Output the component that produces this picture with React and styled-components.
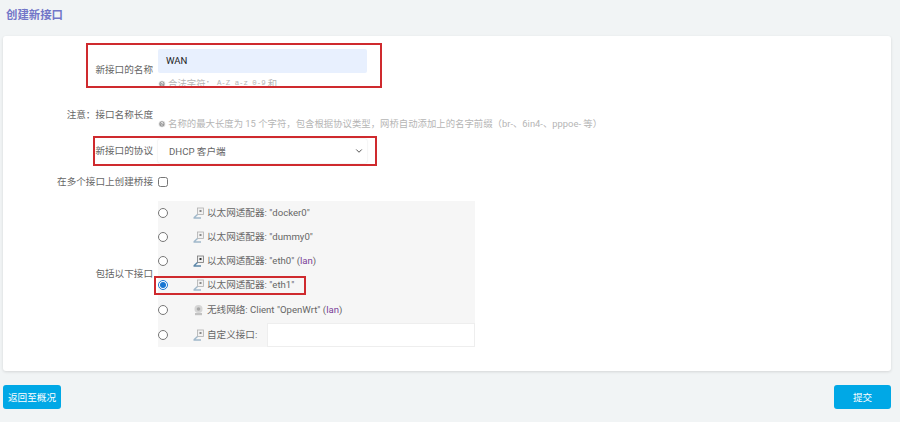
import React from 'react';
import styled, {createGlobalStyle} from 'styled-components';
import {ChevronDown, HelpCircle} from 'lucide-react';

const GlobalStyle = createGlobalStyle`
  html, body {
    margin: 0;
    height: 422px;
    overflow: hidden;
    background: #f1f4f5;
    font-family: Roboto, "Noto Sans CJK SC", sans-serif;
    font-size: 9.6px;
    color: #666;
  }
  * {
    box-sizing: border-box;
  }
`;

const Title = styled.h2`
  margin: 0;
  height: 36px;
  padding: 8px 0 0 6px;
  color: #7276c8;
  font-size: 11.4px;
  line-height: 14px;
  font-weight: 700;
`;

const Card = styled.div`
  height: 335px;
  margin: 0 9px 0 3px;
  padding-top: 13px;
  background: #fff;
  border-radius: 3px;
  box-shadow: 0 1px 3px rgba(0, 0, 0, 0.12);
`;

const Row = styled.div`
  position: relative;
  display: grid;
  grid-template-columns: 150px 1fr;
  column-gap: 5px;
  height: ${props => props.height}px;
  margin-top: ${props => props.top || 0}px;
`;

const Label = styled.div`
  text-align: right;
  line-height: 14px;
  white-space: nowrap;
  padding-top: ${props => props.offset || 0}px;
`;

const Field = styled.div`
  min-width: 0;
  overflow: ${props => (props.clip ? 'hidden' : 'visible')};
`;

const TextBox = styled.div`
  width: 209px;
  height: 24px;
  padding-left: 8px;
  line-height: 24px;
  color: #222;
  background: #e8f0fe;
  border-radius: 2px;
`;

const SelectBox = styled.div`
  display: flex;
  justify-content: space-between;
  align-items: center;
  width: 209px;
  height: 24px;
  padding: 0 3px 0 11px;
  background: #fff;
  box-shadow: 0 0 2px rgba(0, 0, 0, 0.14);
  border-radius: 2px;
`;

const Help = styled.div`
  display: flex;
  align-items: center;
  gap: 2px;
  margin-top: ${props => props.top || 0}px;
  color: #b5b5b5;
  font-size: 9.4px;
  line-height: 13px;
  white-space: pre;
`;

const Mono = styled.span`
  font-family: "Liberation Mono", monospace;
  font-size: 7.4px;
`;

const Check = styled.input`
  display: block;
  width: 10px;
  height: 10px;
  margin: 14px 0 0;
`;

const Interfaces = styled.div`
  width: 317px;
  background: #f6f6f6;
`;

const Interface = styled.label`
  display: flex;
  align-items: center;
  height: ${props => props.height || 24}px;
  line-height: 14px;
  white-space: pre;
`;

const Radio = styled.input`
  width: 10px;
  height: 10px;
  margin: 0 25px 0 0;
  flex: none;
  accent-color: #1976d2;
`;

const IconSlot = styled.svg`
  width: 11px;
  height: 12px;
  margin: 0 3px 0 0;
  flex: none;
  opacity: ${props => props.opacity || 0.55};
`;

const Zone = styled.span`
  color: #7b3f98;
`;

const CustomInput = styled.div`
  width: 208px;
  height: 24px;
  margin-left: auto;
  background: #fff;
  border: 1px solid #eee;
`;

const Footer = styled.div`
  display: flex;
  justify-content: space-between;
  margin: 14px 9px 0 3px;
`;

const Button = styled.button`
  width: ${props => props.width}px;
  height: 24px;
  padding: 0;
  border: none;
  border-radius: 3px;
  color: #fff;
  background: #00a8e6;
  font: inherit;
`;

const Mark = styled.div`
  position: absolute;
  top: ${props => props.y}px;
  left: ${props => props.x}px;
  width: ${props => props.w}px;
  height: ${props => props.h}px;
  border: 2px solid #cf2a2e;
  pointer-events: none;
`;

const AdapterIcon = ({opacity}) => (
    <IconSlot viewBox="0 0 11 12" opacity={opacity}>
        <rect x="4.5" y="1" width="6" height="6.5" fill="#eee" stroke="#777" strokeWidth="0.8" />
        <rect x="6.5" y="3" width="2" height="2" fill="#333" />
        <path d="M1 10.8 L4.5 7.5 M0.5 11 H8" stroke="#5b86a8" strokeWidth="1.4" fill="none" />
    </IconSlot>
);

const WifiIcon = () => (
    <IconSlot viewBox="0 0 11 12">
        <circle cx="5.5" cy="5" r="4" fill="#bbb" />
        <circle cx="5.5" cy="5" r="1.8" fill="#666" />
        <rect x="2" y="9" width="7" height="2.2" fill="#999" />
    </IconSlot>
);

const HelpIcon = () => <HelpCircle size={8} color="#fff" fill="#9a9a9a" strokeWidth={2.4} />;

const COLON = '\uFF1A';
const LENGTH_NOTE = '名称的最大长度为 15 个字符\uFF0C包含根据协议类型\uFF0C网桥自动添加上的名字前缀\uFF08br-、6in4-、pppoe- 等\uFF09';

const App = () => {
    return (
        <>
            <GlobalStyle />
            <Title>创建新接口</Title>
            <Card>
                <Row height={38}>
                    <Label offset={14}>新接口的名称</Label>
                    <Field clip>
                        <TextBox>WAN</TextBox>
                        <Help top={4}><HelpIcon />{'合法字符' + COLON}<Mono>A-Z a-z 0-9</Mono>和</Help>
                    </Field>
                    <Mark x={83} y={-6} w={296} h={45} />
                </Row>
                <Row height={32} top={20}>
                    <Label offset={1}>{'注意' + COLON + '接口名称长度'}</Label>
                    <Field>
                        <Help top={10}><HelpIcon />{LENGTH_NOTE}</Help>
                    </Field>
                </Row>
                <Row height={24}>
                    <Label offset={5}>新接口的协议</Label>
                    <Field>
                        <SelectBox>
                            DHCP 客户端
                            <ChevronDown size={10} color="#555" strokeWidth={2.4} />
                        </SelectBox>
                    </Field>
                    <Mark x={90} y={-3} w={284} h={30} />
                </Row>
                <Row height={38}>
                    <Label offset={12}>在多个接口上创建桥接</Label>
                    <Field>
                        <Check type="checkbox" />
                    </Field>
                </Row>
                <Row height={146}>
                    <Label offset={66}>包括以下接口</Label>
                    <Field>
                        <Interfaces>
                            <Interface><Radio type="radio" name="ifc" /><AdapterIcon />以太网适配器: "docker0"</Interface>
                            <Interface><Radio type="radio" name="ifc" /><AdapterIcon />以太网适配器: "dummy0"</Interface>
                            <Interface><Radio type="radio" name="ifc" /><AdapterIcon opacity={1} />以太网适配器: "eth0" (<Zone>lan</Zone>)</Interface>
                            <Interface><Radio type="radio" name="ifc" defaultChecked /><AdapterIcon />以太网适配器: "eth1"</Interface>
                            <Interface height={25}><Radio type="radio" name="ifc" /><WifiIcon />无线网络: Client "OpenWrt" (<Zone>lan</Zone>)</Interface>
                            <Interface height={25}><Radio type="radio" name="ifc" /><AdapterIcon />自定义接口:<CustomInput /></Interface>
                        </Interfaces>
                    </Field>
                    <Mark x={151} y={75} w={152} h={19} />
                </Row>
            </Card>
            <Footer>
                <Button width={58}>返回至概况</Button>
                <Button width={57}>提交</Button>
            </Footer>
        </>
    );
}

export default App
